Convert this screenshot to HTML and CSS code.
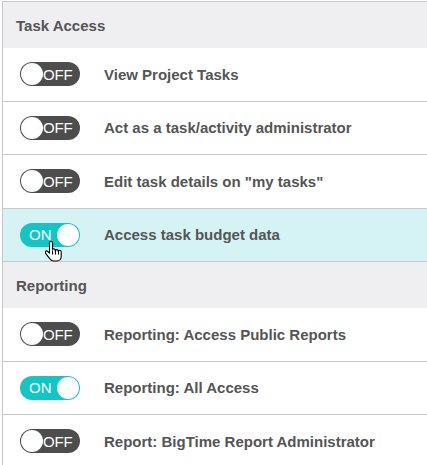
FILE: index.html
```html
<!DOCTYPE html>
<html>
<head>
<meta charset="utf-8">
<link rel="stylesheet" href="styles.css">
</head>
<body>
<div class="panel">
  <div class="section-head">Task Access</div>
  <div class="row">
    <span class="toggle off"><span class="knob"></span><span class="lbl">OFF</span></span>
    <span class="name">View Project Tasks</span>
  </div>
  <div class="row">
    <span class="toggle off"><span class="knob"></span><span class="lbl">OFF</span></span>
    <span class="name">Act as a task/activity administrator</span>
  </div>
  <div class="row">
    <span class="toggle off"><span class="knob"></span><span class="lbl">OFF</span></span>
    <span class="name">Edit task details on "my tasks"</span>
  </div>
  <div class="row active">
    <span class="toggle on"><span class="lbl">ON</span><span class="knob"></span>
      <svg class="cursor" viewBox="0 0 18 24" width="18" height="24">
        <path d="M6 1.5c-.8 0-1.5.7-1.5 1.5v10.2l-1.7-1.7c-.6-.6-1.6-.6-2.2 0-.5.5-.5 1.3 0 1.9l4.1 5.2c1 1.3 2.3 2.4 4.1 2.4h3c2.5 0 4.4-2 4.4-4.600v-4.7c0-.8-.7-1.4-1.5-1.4s-1.5.6-1.5 1.4v-.7c0-.8-.7-1.4-1.5-1.4s-1.5.6-1.5 1.4v-.7c0-.8-.7-1.4-1.5-1.4-.4 0-.8.1-1.1.4V3c0-.8-.7-1.5-1.5-1.5z" fill="#fff" stroke="#000" stroke-width="1.1" stroke-linejoin="round"/>
        <path d="M7.5 10.5v4M10.5 10.6v4M13.5 11.3v3.3" stroke="#000" stroke-width="1" fill="none"/>
      </svg>
    </span>
    <span class="name">Access task budget data</span>
  </div>
  <div class="section-head">Reporting</div>
  <div class="row">
    <span class="toggle off"><span class="knob"></span><span class="lbl">OFF</span></span>
    <span class="name">Reporting: Access Public Reports</span>
  </div>
  <div class="row">
    <span class="toggle on"><span class="lbl">ON</span><span class="knob"></span></span>
    <span class="name">Reporting: All Access</span>
  </div>
  <div class="row">
    <span class="toggle off"><span class="knob"></span><span class="lbl">OFF</span></span>
    <span class="name">Report: BigTime Report Administrator</span>
  </div>
</div>
</body>
</html>
```

FILE: styles.css
```css
html, body {
  margin: 0;
  padding: 0;
  background: #fff;
}
body {
  font-family: "Liberation Sans", Arial, sans-serif;
  font-size: 15px;
  color: #555;
}
.panel {
  margin: 1px 0 0 2px;
  border-top: 1px solid #c8c8c8;
  border-left: 1px solid #c8c8c8;
}
.section-head {
  height: 46px;
  background: #efeff1;
  font-weight: bold;
  display: flex;
  align-items: center;
  padding-left: 13px;
  box-sizing: border-box;
}
.row {
  height: 52.5px;
  border-bottom: 1px solid #c8c8c8;
  display: flex;
  align-items: center;
  padding-left: 17px;
  font-weight: bold;
}
.row:last-child {
  border-bottom: none;
}
.row.active {
  background: #d5f2f4;
}
.name {
  margin-left: 24px;
}
.toggle {
  position: relative;
  width: 60px;
  height: 24px;
  border-radius: 12px;
  display: flex;
  align-items: center;
  box-sizing: border-box;
  flex: none;
  font-weight: normal;
  color: #fff;
  font-size: 15px;
}
.toggle.off {
  background: #4d4d4d;
}
.toggle.on {
  background: #12c6c6;
  justify-content: space-between;
  padding: 0 1px 0 9px;
}
.knob {
  width: 22px;
  height: 22px;
  border-radius: 50%;
  background: #fff;
  flex: none;
}
.toggle.off .knob {
  margin-left: 1px;
}
.toggle.off .lbl {
  margin-left: 0;
  letter-spacing: -0.2px;
}
.cursor {
  position: absolute;
  left: 25px;
  top: 17px;
}
```
